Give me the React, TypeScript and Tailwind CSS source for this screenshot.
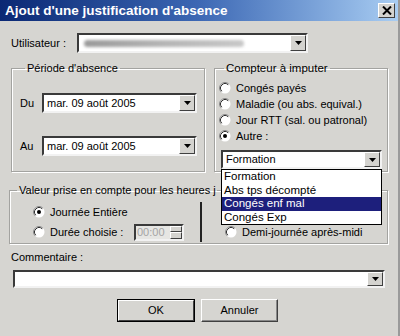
import React from "react";

const sunken =
  "border-2 border-t-[#3a3a3a] border-l-[#3a3a3a] border-r-[#f2f2f2] border-b-[#f2f2f2]";
const raised =
  "border border-t-white border-l-white border-r-[#404040] border-b-[#404040]";

function DropBtn() {
  return (
    <div className={`w-[16px] self-stretch bg-[#d4d3cf] ${raised} flex items-center justify-center`}>
      <svg width="7" height="4" viewBox="0 0 7 4">
        <path d="M0 0h7L3.5 4z" fill="#000" />
      </svg>
    </div>
  );
}

function Combo({ className, children }: { className: string; children?: React.ReactNode }) {
  return (
    <div className={`flex bg-white ${sunken} ${className}`}>
      <div className="flex-1 flex items-center pl-[3px] overflow-hidden whitespace-nowrap">{children}</div>
      <DropBtn />
    </div>
  );
}

function Radio({ on }: { on?: boolean }) {
  return (
    <svg width="12" height="12" viewBox="0 0 12 12" className="shrink-0">
      <circle cx="6" cy="6" r="5.5" fill="#fff" />
      <path d="M2.11 9.89 A5.5 5.5 0 0 1 9.89 2.11" stroke="#8a8a8a" fill="none" />
      <path d="M2.82 9.18 A4.5 4.5 0 0 1 9.18 2.82" stroke="#303030" fill="none" />
      {on && <circle cx="6" cy="6" r="2" fill="#000" />}
    </svg>
  );
}

function RadioRow({ label, on, hidden }: { label: string; on?: boolean; hidden?: boolean }) {
  return (
    <div className={`h-[16px] flex items-center gap-[5px] ${hidden ? "invisible" : ""}`}>
      <Radio on={on} />
      <span>{label}</span>
    </div>
  );
}

const group =
  "border border-[#a3a3a0] shadow-[inset_1px_1px_0_#fff,1px_1px_0_#fff] m-0 p-0";
const legend = "ml-[5px] px-[2px] leading-[13px]";

export default function App() {
  return (
    <div className="w-[400px] h-[336px] bg-[#d6d5d1] text-[11px] leading-[13px] text-black font-['Liberation_Sans',Arial,sans-serif] overflow-hidden flex flex-col border-r-2 border-r-[#9a9a9a]">
      {/* title bar */}
      <div className="h-[21px] shrink-0 bg-linear-to-r from-[#0b2874] via-[#3d68b4] to-[#a9cdf2] flex items-center pl-[5px] pr-[3px]">
        <span className="text-white text-[13.5px] font-bold leading-none">Ajout d'une justification d'absence</span>
        <div className={`ml-auto w-[17px] h-[15px] bg-[#d4d3cf] ${raised} flex items-center justify-center`}>
          <svg width="10" height="9" viewBox="0 0 10 9">
            <path d="M1 0.5 L9 8.5 M9 0.5 L1 8.5" stroke="#000" strokeWidth="2" />
          </svg>
        </div>
      </div>

      <div className="relative flex-1 pl-[11px]">
        {/* Utilisateur */}
        <div className="mt-[12px] h-[20px] flex items-center">
          <span className="w-[66px]">Utilisateur :</span>
          <Combo className="w-[231px] h-[20px]">
            <div className="h-[7px] w-[160px] ml-[2px] bg-linear-to-r from-[#9a9a9a] via-[#b5b5b5] to-[#c8c8c8] blur-[1.5px] rounded-sm" />
          </Combo>
        </div>

        {/* groups */}
        <div className="mt-[9px] flex">
          <fieldset className={`${group} w-[194px] h-[110px] pl-[8px]`}>
            <legend className={legend}>Période d'absence</legend>
            <div className="mt-[18px] flex items-center h-[20px]">
              <span className="w-[22px]">Du</span>
              <Combo className="w-[155px] h-[20px]">mar. 09 août 2005</Combo>
            </div>
            <div className="mt-[23px] flex items-center h-[20px]">
              <span className="w-[22px]">Au</span>
              <Combo className="w-[155px] h-[20px]">mar. 09 août 2005</Combo>
            </div>
          </fieldset>

          <fieldset className={`${group} ml-[9px] w-[174px] h-[110px] pl-[4px]`}>
            <legend className={`${legend} text-[11.5px]`}>Compteur à imputer</legend>
            <div className="mt-[5px] flex flex-col">
              <RadioRow label="Congés payés" />
              <RadioRow label="Maladie (ou abs. equival.)" />
              <RadioRow label="Jour RTT (sal. ou patronal)" />
              <RadioRow label="Autre :" on />
            </div>
            <Combo className="mt-[6px] ml-[2px] w-[161px] h-[19px]">Formation</Combo>
          </fieldset>
        </div>

        {/* valeur */}
        <fieldset className={`${group} mt-[12px] -ml-[2px] w-[379px] h-[60px]`}>
          <legend className={`${legend} ml-[7px] max-w-[200px] overflow-hidden whitespace-nowrap`}>
            Valeur prise en compte pour les heures j
          </legend>
          <div className="flex items-start pl-[23px]">
            <div className="w-[167px] pt-[7px] flex flex-col gap-[4px]">
              <RadioRow label="Journée Entière" on />
              <div className="h-[16px] flex items-center gap-[5px]">
                <Radio />
                <span className="w-[79px]">Durée choisie :</span>
                <div className={`w-[50px] h-[17px] flex bg-[#e6e6e3] ${sunken}`}>
                  <span className="flex-1 text-[#a5a5a5] pl-[1px] leading-[13px]">00:00</span>
                  <div className="w-[12px] flex flex-col">
                    <div className={`flex-1 bg-[#d4d3cf] ${raised}`} />
                    <div className={`flex-1 bg-[#d4d3cf] ${raised}`} />
                  </div>
                </div>
              </div>
            </div>
            <div className="w-[2px] h-[40px] mt-[5px] bg-[#222]" />
            <div className="pl-[23px] pt-[7px] flex flex-col gap-[4px]">
              <RadioRow label="Demi-journée matin" hidden />
              <RadioRow label="Demi-journée après-midi" />
            </div>
          </div>
        </fieldset>

        {/* commentaire */}
        <div className="mt-[7px]">Commentaire :</div>
        <Combo className="mt-[6px] ml-[2px] w-[372px] h-[18px]" />

        {/* buttons */}
        <div className="mt-[11px] ml-[106px] flex gap-[6px]">
          <button className="w-[78px] h-[23px] border border-black bg-[#d6d5d1] p-0">
            <div className={`h-full ${raised} flex items-center justify-center`}>OK</div>
          </button>
          <button className={`w-[77px] h-[23px] bg-[#d6d5d1] ${raised} shadow-[inset_-1px_-1px_0_#888] flex items-center justify-center`}>
            Annuler
          </button>
        </div>

        {/* open dropdown list */}
        <div className="absolute left-[221px] top-[148px] w-[161px] bg-white border border-black flex flex-col text-[11.5px]">
          <div className="h-[13.5px] pl-[2px] leading-[13.5px]">Formation</div>
          <div className="h-[13.5px] pl-[2px] leading-[13.5px]">Abs tps décompté</div>
          <div className="h-[13.5px] pl-[2px] leading-[13.5px] bg-[#1d1f7c] text-white">Congés enf mal</div>
          <div className="h-[13.5px] pl-[2px] leading-[13.5px]">Congés Exp</div>
        </div>
      </div>
    </div>
  );
}
